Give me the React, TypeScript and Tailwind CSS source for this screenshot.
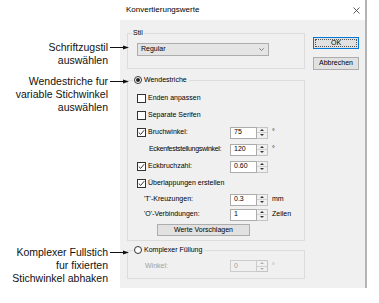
function Arrow() {
  return (
    <svg className="absolute left-[110px] top-[4px]" width="19" height="5" viewBox="0 0 19 5">
      <line x1="0" y1="2.5" x2="15" y2="2.5" stroke="#111" strokeWidth="1" />
      <path d="M13 0.5 L19 2.5 L13 4.5 Z" fill="#111" />
    </svg>
  );
}

function Note({ lines, className }: { lines: string[]; className: string }) {
  return (
    <div className={`w-[108px] text-right ${className}`}>
      {lines.map((l, i) => (
        <div key={i} className="relative h-[13px] whitespace-nowrap leading-[13px]">
          {l}
          {i === 0 && <Arrow />}
        </div>
      ))}
    </div>
  );
}

function Check({ checked }: { checked?: boolean }) {
  return (
    <span className="flex h-[9px] w-[9px] shrink-0 items-center justify-center border border-[#333] bg-white">
      {checked && (
        <svg width="7" height="7" viewBox="0 0 7 7">
          <path d="M0.8 3.6 L2.7 5.4 L6.2 1.2" fill="none" stroke="#222" strokeWidth="0.9" />
        </svg>
      )}
    </span>
  );
}

function Radio({ checked }: { checked?: boolean }) {
  return (
    <span className="flex h-[8px] w-[8px] shrink-0 items-center justify-center rounded-full border border-[#333] bg-white">
      {checked && <span className="h-[4px] w-[4px] rounded-full bg-[#222]" />}
    </span>
  );
}

function Spin({ value, disabled }: { value: string; disabled?: boolean }) {
  const tri = disabled ? "#b0b0b0" : "#333";
  return (
    <div className="flex h-[12px]">
      <div
        className={`flex w-[27px] items-center border pl-[3px] ${
          disabled ? "border-[#cccccc] bg-[#f0f0f0] text-[#a0a0a0]" : "border-[#acacac] bg-white"
        }`}
      >
        {value}
      </div>
      <div className="flex w-[11px] flex-col border border-l-0 border-[#c4c4c4] bg-[#f0f0f0]">
        <div className="flex flex-1 items-center justify-center border-b border-[#d0d0d0]">
          <svg width="4" height="2" viewBox="0 0 4 2">
            <path d="M0 2 L2 0 L4 2 Z" fill={tri} />
          </svg>
        </div>
        <div className="flex flex-1 items-center justify-center">
          <svg width="4" height="2" viewBox="0 0 4 2">
            <path d="M0 0 L2 2 L4 0 Z" fill={tri} />
          </svg>
        </div>
      </div>
    </div>
  );
}

function CheckRow({ label, checked, value, unit }: { label: string; checked?: boolean; value?: string; unit?: string }) {
  return (
    <div className="flex h-[17px] items-center">
      <div className="flex w-[93px] items-center gap-[2px] whitespace-nowrap">
        <Check checked={checked} />
        <span>{label}</span>
      </div>
      {value && <Spin value={value} />}
      {unit && <span className="ml-[4px]">{unit}</span>}
    </div>
  );
}

function ValueRow({ label, value, unit, indent, h }: { label: string; value: string; unit?: string; indent: string; h: string }) {
  return (
    <div className={`flex items-center ${h}`}>
      <div className={`w-[93px] whitespace-nowrap ${indent}`}>{label}</div>
      <Spin value={value} />
      {unit && <span className="ml-[4px]">{unit}</span>}
    </div>
  );
}

function Dialog() {
  return (
    <div className="flex h-[288px] w-[247px] shrink-0 flex-col border-r-2 border-[#b4b4b4] bg-[#f0f0f0] font-['Liberation_Sans',Arial,sans-serif] text-[7px] text-black">
      <div className="flex h-[20px] items-center justify-between bg-white pl-[6px] pr-[5px] text-[8px]">
        <span>Konvertierungswerte</span>
        <svg width="7" height="7" viewBox="0 0 7 7" className="mt-[1px]">
          <path d="M0.5 0.5 L6.5 6.5 M6.5 0.5 L0.5 6.5" stroke="#333" strokeWidth="0.8" />
        </svg>
      </div>
      <div className="flex pl-[7px] pt-[9px]">
        <div className="flex w-[178px] flex-col">
          <fieldset className="h-[40px] border border-[#dcdcdc]">
            <legend className="ml-[4px] px-[1px] leading-[8px]">Stil</legend>
            <div className="ml-[9px] mt-[6px] flex h-[13px] w-[132px] items-center justify-between border border-[#adadad] bg-[#e5e5e5] pl-[3px] pr-[4px]">
              <span>Regular</span>
              <svg width="5" height="3" viewBox="0 0 5 3">
                <path d="M0.3 0.3 L2.5 2.5 L4.7 0.3" fill="none" stroke="#555" strokeWidth="0.7" />
              </svg>
            </div>
          </fieldset>

          <fieldset className="mt-[6px] h-[166px] border border-[#dcdcdc]">
            <legend className="ml-[5px] pl-[1px] pr-[2px] leading-[10px]">
              <span className="flex items-center gap-[2px]">
                <Radio checked />
                <span>Wendestriche</span>
              </span>
            </legend>
            <div className="flex flex-col pl-[9px] pt-[5px]">
              <CheckRow label="Enden anpassen" />
              <CheckRow label="Separate Serifen" />
              <CheckRow label="Bruchwinkel:" checked value="75" unit="°" />
              <ValueRow label="Eckenfeststellungswinkel:" value="120" unit="°" indent="pl-[12px] tracking-[-0.3px]" h="h-[17px]" />
              <CheckRow label="Eckbruchzahl:" checked value="0.60" />
              <CheckRow label="Überlappungen erstellen" checked />
              <ValueRow label="'T'-Kreuzungen:" value="0.3" unit="mm" indent="pl-[7px]" h="h-[15px]" />
              <ValueRow label="'O'-Verbindungen:" value="1" unit="Zeilen" indent="pl-[7px]" h="h-[15px]" />
              <div className="ml-[20px] mt-[2px] flex h-[12px] w-[93px] items-center justify-center border border-[#adadad] bg-[#e1e1e1]">
                Werte Vorschlagen
              </div>
            </div>
          </fieldset>

          <fieldset className="mt-[4px] h-[34px] border border-[#dcdcdc]">
            <legend className="ml-[5px] pl-[1px] pr-[2px] leading-[10px]">
              <span className="flex items-center gap-[2px]">
                <Radio />
                <span>Komplexer Füllung</span>
              </span>
            </legend>
            <div className="mt-[5px] flex h-[12px] items-center pl-[9px] text-[#a0a0a0]">
              <div className="w-[93px] pl-[8px]">Winkel:</div>
              <Spin value="0" disabled />
              <span className="ml-[4px]">°</span>
            </div>
          </fieldset>
        </div>

        <div className="ml-[8px] mt-[8px] flex flex-col gap-[8px]">
          <div className="flex h-[12px] w-[46px] items-center justify-center border border-[#0078d7] bg-[#e1e1e1] p-[1px]">
            <div className="flex h-full w-full items-center justify-center border border-dotted border-[#555]">OK</div>
          </div>
          <div className="flex h-[13px] w-[46px] items-center justify-center border border-[#adadad] bg-[#e1e1e1]">
            Abbrechen
          </div>
        </div>
      </div>
    </div>
  );
}

export default function App() {
  return (
    <div className="flex h-[303px] w-[379px] overflow-hidden bg-white">
      <div className="relative z-10 flex w-[120px] shrink-0 flex-col font-['Liberation_Sans',Arial,sans-serif] text-[10.5px] text-[#111]">
        <Note className="mt-[41px]" lines={["Schriftzugstil", "auswählen"]} />
        <Note className="mt-[8px]" lines={["Wendestriche fur", "variable Stichwinkel", "auswählen"]} />
        <Note className="mt-[132px]" lines={["Komplexer Fullstich", "fur fixierten", "Stichwinkel abhaken"]} />
      </div>
      <Dialog />
    </div>
  );
}
